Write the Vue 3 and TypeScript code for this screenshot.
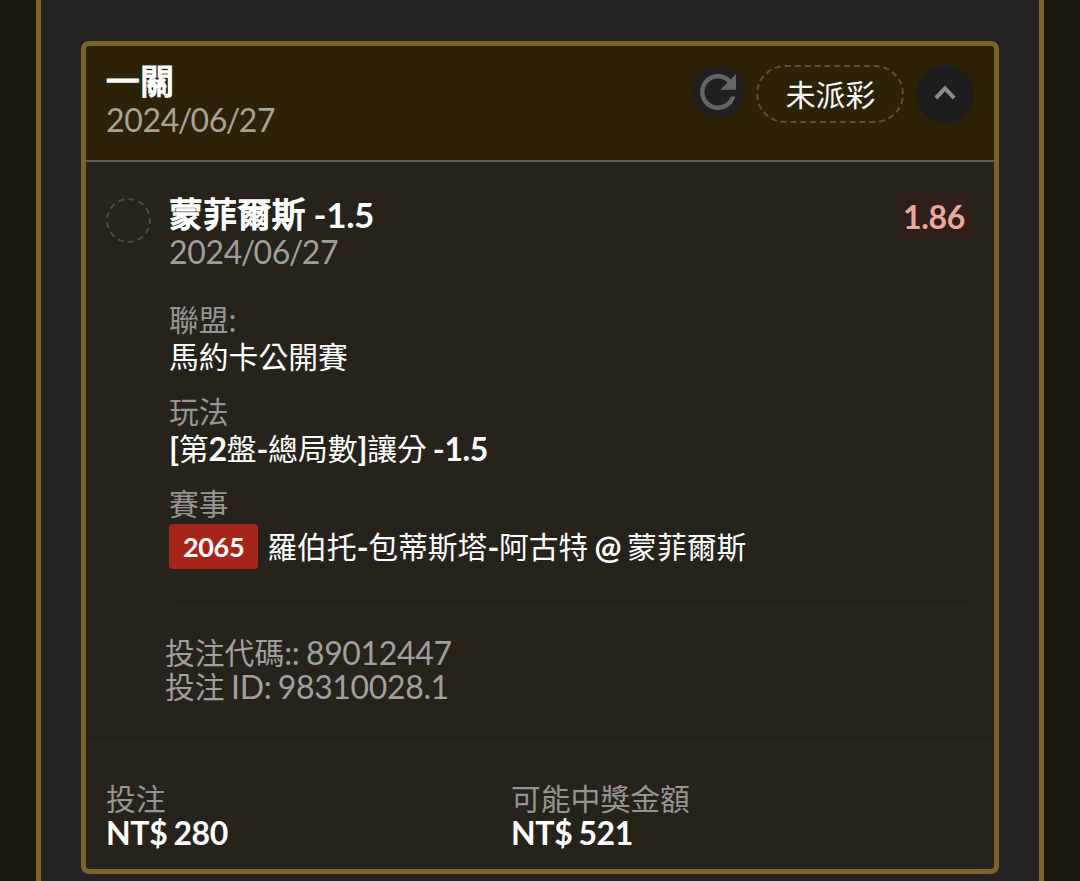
<script setup lang="ts">
import { h, ref } from 'vue'
import type { FunctionalComponent } from 'vue'

type Field = {
  id: string
  label: string
  value: string
  badge?: string
}

const bet = {
  title: '一關',
  date: '2024/06/27',
  status: '未派彩',
  selection: '蒙菲爾斯 -1.5',
  selectionDate: '2024/06/27',
  odds: '1.86',
}

const fields: Field[] = [
  { id: 'league', label: '聯盟:', value: '馬約卡公開賽' },
  { id: 'market', label: '玩法', value: '[第2盤-總局數]讓分 -1.5' },
  { id: 'match', label: '賽事', value: '羅伯托-包蒂斯塔-阿古特 @ 蒙菲爾斯', badge: '2065' },
]

const codes = ['投注代碼:: 89012447', '投注 ID: 98310028.1']

const totals = [
  { id: 'stake', label: '投注', value: 'NT$ 280' },
  { id: 'payout', label: '可能中獎金額', value: 'NT$ 521' },
]

const open = ref(true)

// Han characters run a little smaller than the Latin around them,
// and the slashes of a date sit tight against the digits
const MixedText: FunctionalComponent<{ text: string }> = (props) =>
  props.text
    .split(/(\p{Script=Han}+|\/)/u)
    .filter(Boolean)
    .map((part) => {
      if (part === '/') return h('span', { class: 'slash' }, part)
      return /\p{Script=Han}/u.test(part) ? h('span', { class: 'han' }, part) : part
    })
MixedText.props = ['text']
</script>

<template>
  <div class="page">
    <main class="frame">
      <article class="card">
        <header class="head">
          <div class="head-text">
            <h2 class="title"><MixedText :text="bet.title" /></h2>
            <div class="date"><MixedText :text="bet.date" /></div>
          </div>
          <div class="actions">
            <button class="refresh" type="button" aria-label="重新整理">
              <svg width="52" height="52" viewBox="0 0 52 52">
                <path
                  transform="translate(-1 -1) scale(2.25)"
                  fill="#666563"
                  d="M17.65 6.35C16.2 4.9 14.21 4 12 4c-4.42 0-7.99 3.58-7.99 8s3.57 8 7.99 8c3.73 0 6.84-2.55 7.73-6h-2.08c-.82 2.33-3.04 4-5.65 4-3.31 0-6-2.69-6-6s2.69-6 6-6c1.66 0 3.14.69 4.22 1.78L13 11h7V4l-2.35 2.35z"
                />
              </svg>
            </button>
            <span class="status"><MixedText :text="bet.status" /></span>
            <button class="toggle" type="button" aria-label="收合" @click="open = !open">
              <svg width="58" height="58" viewBox="0 0 58 58" :class="{ closed: !open }">
                <path d="M19.9 33 L29 23.4 L38.1 33" fill="none" stroke="#8b8b8b" stroke-width="4" />
              </svg>
            </button>
          </div>
        </header>

        <section v-if="open" class="body">
          <span class="marker" />
          <div class="detail">
            <div class="pick">
              <div>
                <h3 class="title"><MixedText :text="bet.selection" /></h3>
                <div class="date"><MixedText :text="bet.selectionDate" /></div>
              </div>
              <span class="odds">{{ bet.odds }}</span>
            </div>

            <dl class="fields">
              <div v-for="f in fields" :key="f.id" class="field">
                <dt class="label"><MixedText :text="f.label" /></dt>
                <dd class="value">
                  <span v-if="f.badge" class="badge">{{ f.badge }}</span>
                  <span><MixedText :text="f.value" /></span>
                </dd>
              </div>
            </dl>

            <div class="codes">
              <div v-for="c in codes" :key="c"><MixedText :text="c" /></div>
            </div>
          </div>
        </section>

        <footer class="totals">
          <div v-for="t in totals" :key="t.id" class="total">
            <div class="label"><MixedText :text="t.label" /></div>
            <div class="amount">{{ t.value }}</div>
          </div>
        </footer>
      </article>
    </main>
  </div>
</template>

<style>
body {
  margin: 0;
  overflow: hidden;
  background: #1b1811;
}
</style>

<style scoped>
.page {
  box-sizing: border-box;
  height: 881px;
  padding: 0 36px;
  color: #fff;
  font-family: Lato, 'Noto Sans CJK TC', sans-serif;
  font-size: 32px;
  letter-spacing: -0.35px;
  word-spacing: -1.4px;
  overflow: hidden;
}

.frame {
  box-sizing: border-box;
  height: 100%;
  padding: 41px 40px 0;
  border: solid #7e6327;
  border-width: 0 5px;
  background: #232323;
}

.card {
  box-sizing: border-box;
  height: 833px;
  border: 5px solid #7e6327;
  border-radius: 8px;
  background: #26231d;
  overflow: hidden;
}

.page :deep(.han) {
  font-size: 29.8px;
  font-weight: 400;
  line-height: 1;
  letter-spacing: 0;
  vertical-align: 1px;
}

.page :deep(.slash) {
  margin: 0 -1.2px;
}

.title {
  margin: 0;
  font-size: 35px;
  font-weight: 700;
  line-height: 37px;
  word-spacing: -0.8px;
}

.page .title :deep(.han) {
  font-size: 33.6px;
  letter-spacing: 0.7px;
  -webkit-text-stroke: 1.5px currentColor;
}

.date {
  color: #9f9d99;
  line-height: 37px;
}

.head {
  box-sizing: border-box;
  display: flex;
  justify-content: space-between;
  height: 116px;
  padding: 17px 20px 0;
  border-bottom: 2px solid #625d53;
  background: #2c2208;
}

.head .date {
  margin-top: 1px;
  color: #a8a293;
}

.actions {
  display: flex;
  align-items: flex-start;
  gap: 12px;
}

button {
  display: block;
  padding: 0;
  border: 0;
  border-radius: 50%;
  cursor: pointer;
}

button svg {
  display: block;
}

.closed {
  transform: rotate(180deg);
}

.refresh {
  width: 52px;
  height: 52px;
  margin-top: 3px;
  background: #202020;
}

.status {
  box-sizing: border-box;
  display: grid;
  place-items: center;
  width: 148px;
  height: 58px;
  margin-top: 2px;
  padding: 2px 0 0 1px;
  border: 2px dashed #575142;
  border-radius: 29px;
}

.toggle {
  width: 58px;
  height: 58px;
  margin-top: 2px;
  background: #1d1d1d;
}

.body {
  box-sizing: border-box;
  display: flex;
  gap: 18px;
  height: 580px;
  padding: 34px 20px 0;
}

.marker {
  box-sizing: border-box;
  flex: none;
  width: 45px;
  height: 45px;
  margin-top: 2px;
  border: 2px dashed #4c4a45;
  border-radius: 50%;
}

.detail {
  flex: 1;
}

.pick {
  display: flex;
  justify-content: space-between;
  align-items: flex-start;
}

.odds {
  margin-top: -4px;
  margin-right: 3px;
  padding: 0 6px 0 7px;
  border-radius: 4px;
  background: #2e1f19;
  color: #eba79d;
  font-weight: 700;
  line-height: 49px;
}

.fields {
  display: flex;
  flex-direction: column;
  gap: 18px;
  margin: 0 5px 0 0;
  padding: 31px 0 36px;
  border-bottom: 2px solid #292721;
}

.label {
  color: #96948f;
  line-height: 37px;
}

.value {
  display: flex;
  align-items: center;
  gap: 9px;
  margin: 0;
  font-weight: 700;
  line-height: 37px;
}

.badge {
  margin-top: 2px;
  padding: 0 14px;
  border-radius: 4px;
  background: #a72418;
  font-size: 27px;
  line-height: 45px;
}

.badge + span {
  padding-top: 2px;
}

.codes {
  margin-left: -4px;
  padding-top: 29px;
  color: #a19f9b;
  line-height: 34px;
}

.totals {
  display: grid;
  grid-template-columns: 405px 1fr;
  padding: 38px 20px 0;
  border-top: 2px solid #292721;
}

.totals .label {
  line-height: 34px;
}

.amount {
  font-weight: 700;
  line-height: 34px;
}
</style>
